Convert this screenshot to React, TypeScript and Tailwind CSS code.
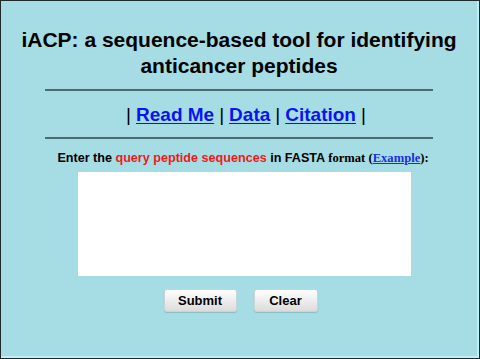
export default function App() {
  return (
    <div className="h-[359px] w-[480px] overflow-hidden bg-[#1e2a2c] p-px">
      <div className="flex h-full w-full flex-col items-center border-r-2 border-b-2 border-[#bff0f5] bg-[#a6dce4] font-['Liberation_Sans',Arial,sans-serif] text-black">
        <h1 className="mt-[26px] w-[460px] text-center text-[21px] font-bold leading-[26px]">
          iACP: a sequence-based tool for identifying anticancer peptides
        </h1>
        <div className="mt-[10px] h-[2px] w-[388px] bg-[#4d6c72]" />
        <div className="mt-[12px] ml-[14px] flex items-center gap-[5px] text-[19px] font-bold leading-[24px]">
          <span className="font-normal">|</span>
          <a href="#" className="text-[#0a14f0] underline decoration-1 underline-offset-2">Read Me</a>
          <span className="font-normal">|</span>
          <a href="#" className="text-[#0a14f0] underline decoration-1 underline-offset-2">Data</a>
          <span className="font-normal">|</span>
          <a href="#" className="text-[#0a14f0] underline decoration-1 underline-offset-2">Citation</a>
          <span className="font-normal">|</span>
        </div>
        <div className="mt-[10px] h-[2px] w-[388px] bg-[#4d6c72]" />
        <p className="mt-[11px] ml-[8px] text-[12.6px] font-bold leading-[16px]">
          Enter the <span className="text-[#f01818]">query peptide sequences</span> in FASTA{' '}
          <span className="font-['Liberation_Serif','Times_New_Roman',serif]">
            format (
            <a href="#" className="text-[#1a2ee0] underline">Example</a>
            ):
          </span>
        </p>
        <textarea className="mt-[6px] ml-[11px] h-[104px] w-[333px] resize-none bg-white outline-none" />
        <div className="mt-[13px] flex gap-[17px] pl-[3px]">
          <button className="h-[23px] w-[73px] rounded-[3px] border border-[#c8d4d6] bg-gradient-to-b from-white to-[#dcdcdc] text-[13px] font-bold shadow-[0_1px_1px_rgba(0,0,0,0.15)]">
            Submit
          </button>
          <button className="h-[23px] w-[64px] rounded-[3px] border border-[#c8d4d6] bg-gradient-to-b from-white to-[#dcdcdc] text-[13px] font-bold shadow-[0_1px_1px_rgba(0,0,0,0.15)]">
            Clear
          </button>
        </div>
      </div>
    </div>
  )
}
